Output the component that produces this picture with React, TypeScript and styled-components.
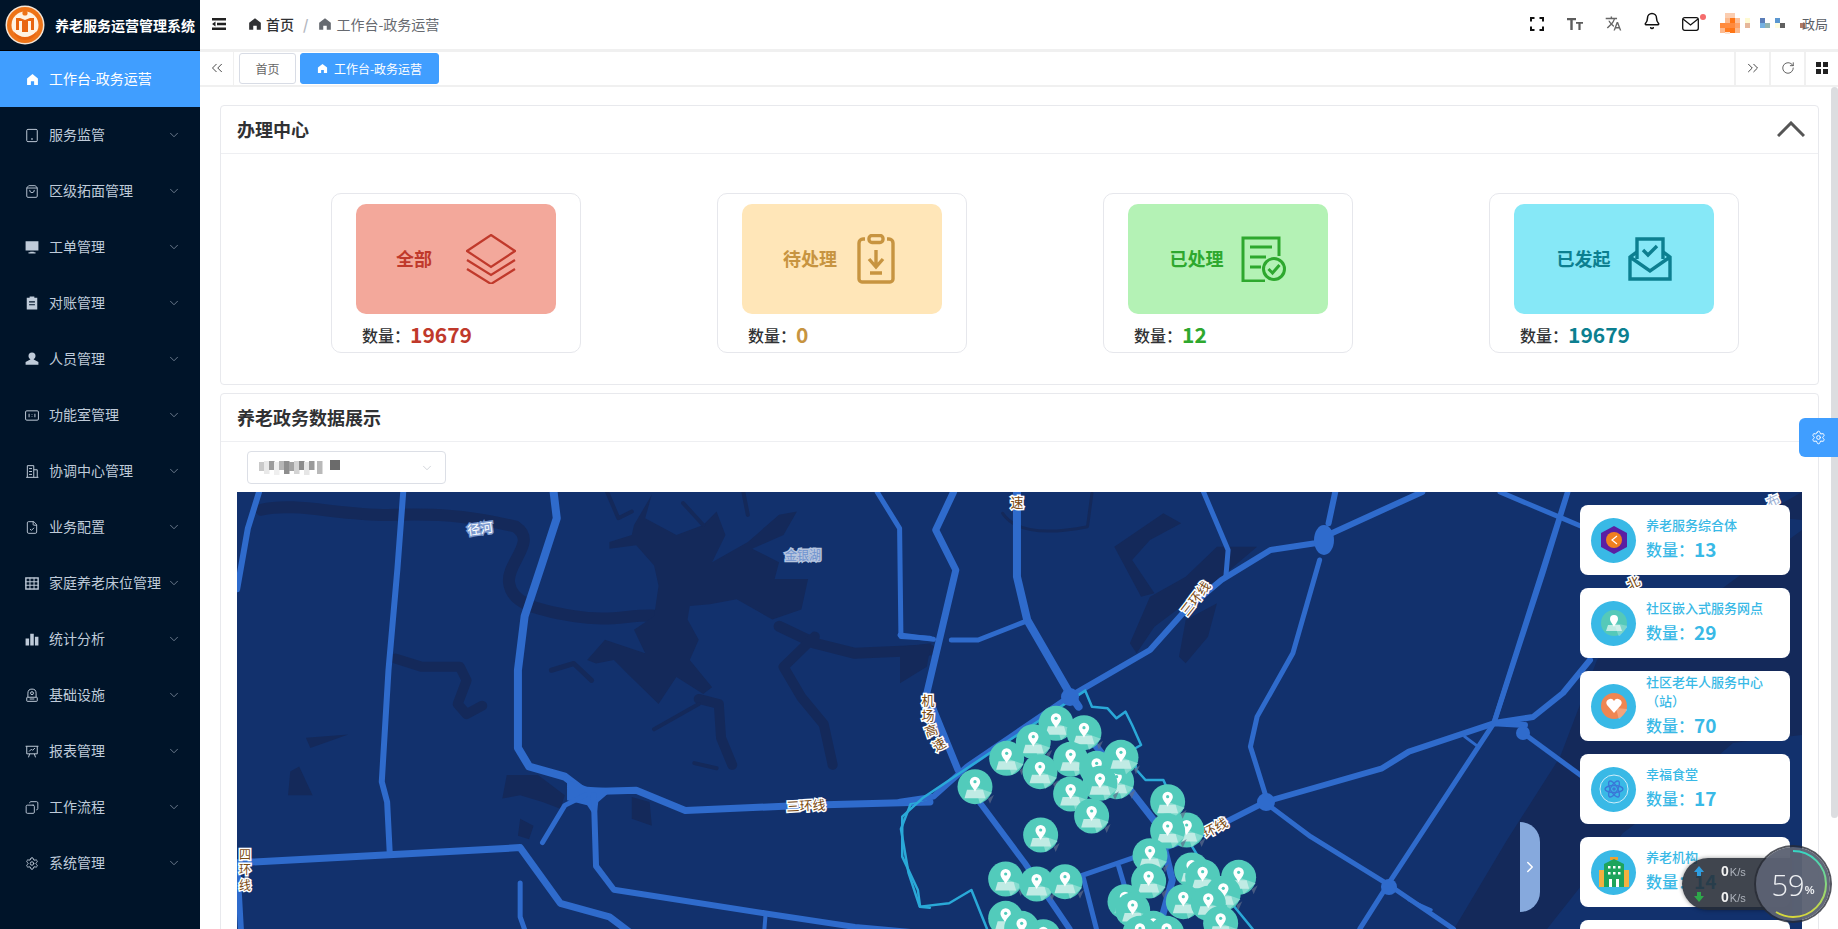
import React from 'react';
import styled, { createGlobalStyle } from 'styled-components';
import { ShoppingBag, ChevronDown, ChevronsLeft, ChevronsRight, Bell, RotateCw, FileCheck, Copy, Settings, ChevronRight } from 'lucide-react';
import { MdTranslate } from 'react-icons/md';

const Global = createGlobalStyle`
  html, body { margin: 0; padding: 0; height: 100%; overflow: hidden; background: #fff; }
  body, button { font-family: "Noto Sans CJK SC", "Liberation Sans", sans-serif; }
  * { box-sizing: border-box; }
`;

const Shell = styled.div`display: flex; width: 1838px; height: 929px; overflow: hidden;`;
const Sidebar = styled.aside`width: 200px; flex: none; background: #001429; color: #bfcbd9; display: flex; flex-direction: column;`;
const Brand = styled.div`height: 51px; display: flex; align-items: center; gap: 10px; padding-left: 5px; border-bottom: 1px solid #000; flex: none;`;
const BrandName = styled.span`font-size: 14px; font-weight: 700; color: #fff; white-space: nowrap; letter-spacing: 0;`;
const MenuItem = styled.div<{ $active?: boolean }>`
  height: 56px; flex: none; display: flex; align-items: center; padding: 0 19px 0 25px;
  font-size: 14px; white-space: nowrap;
  background: ${p => (p.$active ? '#409eff' : 'transparent')};
  color: ${p => (p.$active ? '#fff' : '#bfcbd9')};
`;
const MenuIcon = styled.span`width: 14px; height: 14px; display: flex; align-items: center; justify-content: center; margin-right: 10px; flex: none;`;
const MenuText = styled.span`flex: 1; line-height: 20px; position: relative; top: -1px;`;
const Main = styled.div`flex: 1; min-width: 0; display: flex; flex-direction: column;`;
const Header = styled.header`height: 52px; flex: none; display: flex; align-items: center; padding: 0 10px 2px 12px; border-bottom: 3px solid #f0f0f0;`;
const Crumb = styled.div`display: flex; align-items: center; margin-left: 22px; font-size: 14px; flex: 1;`;
const CrumbPart = styled.span<{ $strong?: boolean }>`
  display: flex; align-items: center; gap: 4px; font-weight: ${p => (p.$strong ? 500 : 400)};
  color: ${p => (p.$strong ? '#303133' : '#666a70')};
`;
const CrumbSep = styled.span`color: #b4b8bf; margin: 0 10px 0 9px; font-weight: 700;`;
const Tools = styled.div`display: flex; align-items: center; position: relative;`;
const Tool = styled.span<{ $w: number; $lift?: number }>`
  width: ${p => p.$w}px; display: flex; justify-content: center; position: relative;
  transform: translateY(${p => -(p.$lift ?? 0)}px); color: #333;
`;
const Dot = styled.i`position: absolute; right: 3px; top: -3px; width: 6px; height: 6px; border-radius: 50%; background: #f56c6c;`;
const MosaicSlot = styled.span`margin-left: 11px;`;
const UserName = styled.span`font-size: 13px; color: #5a5e66; margin-left: -3px; width: 26px; white-space: nowrap;`;
const TabBar = styled.div`height: 35px; flex: none; display: flex; align-items: center; border-bottom: 2px solid #f0f0f0; padding-bottom: 1px;`;
const TabBtn = styled.div<{ $right?: boolean; $w?: number }>`
  width: ${p => p.$w ?? (p.$right ? 35 : 34)}px; height: 33px; display: flex; align-items: center; justify-content: center; color: #444;
  ${p => (p.$right ? 'border-left: 2px solid #f0f0f0;' : 'border-right: 1px solid #f0f0f0;')}
`;
const TabList = styled.div`display: flex; gap: 4px; margin-left: 5px; flex: 1;`;
const Tab = styled.div<{ $active?: boolean }>`
  height: 31px; display: flex; align-items: center; justify-content: center; gap: 6px; font-size: 12px; border-radius: 3px;
  padding: 0 13px; border: 1px solid ${p => (p.$active ? '#409eff' : '#d8dce5')};
  background: ${p => (p.$active ? '#409eff' : '#fff')}; color: ${p => (p.$active ? '#fff' : '#666')};
  width: ${p => (p.$active ? 139 : 57)}px; white-space: nowrap;
`;
const Content = styled.div`flex: 1; min-height: 0; overflow: hidden; padding: 18px 19px 20px 20px;`;
const ScrollThumb = styled.div`position: fixed; left: 1831px; top: 87px; width: 7px; height: 731px; border-radius: 4px; background: #dcdde0;`;
const Card = styled.section`border: 1px solid #e8e9ed; border-radius: 4px; background: #fff; & + & { margin-top: 8px; }`;
const CardHead = styled.div`height: 48px; display: flex; align-items: center; justify-content: space-between; padding: 0 13px 2px 16px; border-bottom: 1px solid #eeeff2;`;
const CardTitle = styled.h2`margin: 0; font-size: 18px; line-height: 24px; font-weight: 700; color: #303133;`;
const StatRow = styled.div`display: flex; justify-content: space-around; padding: 39px 11px 31px 42px;`;
const Stat = styled.div`width: 250px; height: 160px; border: 1px solid #e6e7ec; border-radius: 10px; padding: 10px 24px 0;`;
const StatBox = styled.div<{ $bg: string; $fg: string; $gap: number }>`
  width: 200px; height: 110px; border-radius: 10px; background: ${p => p.$bg}; color: ${p => p.$fg};
  display: flex; align-items: center; justify-content: center; gap: ${p => p.$gap}px;
  font-size: 18px; font-weight: 700;
`;
const StatLabel = styled.span`position: relative; top: -1px;`;
const StatCount = styled.div`display: flex; align-items: center; margin: 7px 0 0 6px; height: 28px; font-size: 16px; font-weight: 500; color: #303133;`;
const StatNum = styled.span<{ $fg: string }>`font-size: 21px; font-weight: 700; color: ${p => p.$fg}; line-height: 24px; position: relative; top: -1px;`;
const MapBody = styled.div`padding: 9px 16px 0;`;
const Select = styled.div`width: 199px; height: 33px; margin: 0 0 8px 10px; border: 1px solid #dcdfe6; border-radius: 4px; display: flex; align-items: center; justify-content: space-between; padding: 0 11px 0 11px; color: #c0c4cc;`;
const MapFrame = styled.div`position: relative; height: 545px; background: #12316d; overflow: hidden; margin-bottom: 18px;`;
const MapSvg = styled.svg`
  display: block; width: 100%; height: 100%;
  path, polyline { vector-effect: non-scaling-stroke; stroke-linejoin: round; stroke-linecap: round; }
`;
const Panels = styled.div`position: absolute; top: 13px; right: 12px; display: flex; flex-direction: column; gap: 13px;`;
const Panel = styled.div`width: 210px; height: 70px; border-radius: 8px; background: #fff; display: flex; align-items: center; gap: 10px; padding: 0 11px; color: #39b9e6;`;
const Disc = styled.span`width: 45px; height: 45px; border-radius: 50%; flex: none; background: #39b9e6; display: flex; align-items: center; justify-content: center;`;
const PanelText = styled.div`width: 132px; position: relative; top: -2px;`;
const PanelTitle = styled.div`font-size: 13px; line-height: 19px; font-weight: 500;`;
const PanelCount = styled.div`display: flex; align-items: center; font-size: 16px; font-weight: 500; line-height: 24px; margin-top: 3px;`;
const PanelNum = styled.span`font-size: 19px; font-weight: 700;`;
const Toggle = styled.div`position: absolute; left: 1283px; top: 330px; width: 20px; height: 90px; background: #86a9dd; border-radius: 0 20px 20px 0; display: flex; align-items: center; justify-content: center; color: #fff;`;
const SettingsTab = styled.div`position: fixed; right: 0; top: 418px; width: 39px; height: 39px; background: #409eff; border-radius: 6px 0 0 6px; display: flex; align-items: center; justify-content: center; color: #fff;`;
const NetPill = styled.div`position: fixed; left: 1682px; top: 858px; width: 110px; height: 52px; background: rgba(38, 43, 54, .88); border-radius: 26px 0 0 26px; display: grid; grid-template-rows: 1fr 1fr; padding-left: 11px; box-shadow: 0 0 4px rgba(0,0,0,.4);`;
const NetRow = styled.div`display: flex; align-items: center; gap: 16px; height: 26px;`;
const NetZero = styled.span`font-size: 14px; font-weight: 700; color: #f2f2f2; font-family: "Liberation Sans", sans-serif;`;
const NetUnit = styled.span`font-size: 11px; font-weight: 400; color: #aeb3bc; margin-left: 1px;`;
const NetDial = styled.div`position: fixed; left: 1756px; top: 847px; width: 74px; height: 74px; border-radius: 50%; background: rgba(92, 98, 114, .96); box-shadow: 0 0 0 2px rgba(40,44,54,.8); display: flex; align-items: center; justify-content: center; color: #eef0f3;`;
const DialRing = styled.svg`position: absolute; inset: 0;`;
const DialNum = styled.span`font-size: 29px; font-weight: 300; font-family: "Open Sans", sans-serif; line-height: 1;`;
const DialPct = styled.span`font-size: 11px; font-weight: 700; margin-top: 12px; font-family: "Liberation Sans", sans-serif;`;

const HomeIcon = ({ s = 14 }: { s?: number }) => (
  <svg width={s} height={s} viewBox="0 0 24 24" fill="currentColor"><path d="M12 2 2 10v12h7v-7h6v7h7V10z" /></svg>
);
const Filled = ({ d }: { d: string }) => (
  <svg width="14" height="14" viewBox="0 0 24 24" fill="#bfcbd9"><path d={d} fillRule="evenodd" /></svg>
);
const Line = ({ children }: { children: React.ReactNode }) => (
  <svg width="15" height="15" viewBox="0 0 24 24" fill="none" stroke="#bfcbd9" strokeWidth="1.7">{children}</svg>
);

const menu: [string, React.ReactNode][] = [
  ['服务监管', <Line><rect x="3" y="1.5" width="18" height="21" rx="2" /><circle cx="12" cy="18" r=".8" /></Line>],
  ['区级拓面管理', <ShoppingBag size={15} strokeWidth={1.6} />],
  ['工单管理', <Filled d="M1 2h22v16H1zM9 20h6v1h3v2H6v-2h3z" />],
  ['对账管理', <Filled d="M8 1h8v2h5v20H3V3h5zM7 9v2h10V9zM7 14v2h10v-2z" />],
  ['人员管理', <Filled d="M12 1a6 6 0 0 1 6 6c0 2-1 4-3 5v1l8 4v5H1v-5l8-4v-1C7 11 6 9 6 7a6 6 0 0 1 6-6z" />],
  ['功能室管理', <Line><rect x="1" y="4" width="22" height="16" rx="2" /><path d="M7 9v6M17 9v6M12 10v1M12 13v1" /></Line>],
  ['协调中心管理', <Line><path d="M2 22h21M4 22V2h11v20M15 9h6v13M7 7h5M7 12h5M7 17h5" /></Line>],
  ['业务配置', <FileCheck size={15} strokeWidth={1.6} />],
  ['家庭养老床位管理', <Line><rect x="1.5" y="2.5" width="21" height="19" strokeWidth="2.4" /><path d="M8.5 2v20M15.5 2v20M1 9h22M1 15h22" /></Line>],
  ['统计分析', <Filled d="M1 11h6v12H1zM9 3h6v20H9zM17 8h6v15h-6z" />],
  ['基础设施', <Line><path d="M5 15V8a7 7 0 0 1 14 0v7" /><circle cx="12" cy="8" r="2.5" /><rect x="3" y="15" width="18" height="7" rx="1" /><path d="M8 18h8" /></Line>],
  ['报表管理', <Line><path d="M1 3h22M3 3v13h18V3M8 16l-2 6M16 16l2 6M7 12l4-4 2 2 4-4" /></Line>],
  ['工作流程', <Copy size={15} strokeWidth={1.6} style={{ transform: 'scaleX(-1)' }} />],
  ['系统管理', <Settings size={15} strokeWidth={1.6} />],
];

const Logo = () => (
  <svg width="40" height="40" viewBox="0 0 40 40">
    <circle cx="20" cy="20" r="19.5" fill="#f3e6d8" />
    <circle cx="20" cy="20" r="18" fill="#ee7418" />
    <circle cx="20" cy="20" r="13.5" fill="#fff3e3" />
    <circle cx="20" cy="8" r="2.6" fill="#ee7418" />
    <path d="M11 25V13h4l5 2 5-2h4v12h-3V16h-3v11h-6V16h-3v9z" fill="#e9650f" />
    <path d="M8 26q6 6 12 6t12-6q-3 9-12 9T8 26z" fill="#e9650f" />
  </svg>
);

const Mosaic = () => {
  const c: [number, number, string][] = [
    [5, 0, '#fbcdb0'], [10, 0, '#fbcdb0'],
    [5, 5, '#fbb98c'], [10, 5, '#ff7514'], [15, 5, '#fbc09a'],
    [0, 10, '#ff8a3c'], [5, 10, '#ff8c40'], [10, 10, '#ff8a3c'], [15, 10, '#ffa266'],
    [0, 15, '#fdb98e'], [5, 15, '#ff7b20'], [10, 15, '#ff7514'], [15, 15, '#fbb98c'],
    [5, 19, '#fde3d2'],
    [25, 5, '#fffad2'], [25, 10, '#e6b79a'],
    [40, 5, '#5a7db8'], [45, 10, '#92b3b0'], [40, 10, '#74b0e2'],
    [55, 5, '#5b97d0'], [55, 10, '#fffde0'], [60, 10, '#606060'],
    [80, 10, '#b07860'],
  ];
  return (
    <svg width="85" height="21" viewBox="0 0 85 21" style={{ display: 'block' }}>
      {c.map(([x, y, f], i) => <rect key={i} x={x} y={y} width="5" height="5" fill={f} />)}
    </svg>
  );
};

const SelectMosaic = () => {
  const v = '#c9c9c9,0;#e9e9e9,5;#9c9c9c,10;#efefef,15;#b5b5b5,20;#8e8e8e,25;#a3a3a3,30;#d4d4d4,35;#8c8c8c,40;#e6e6e6,45;#9a9a9a,50;#b9b9b9,58'.split(';');
  return (
    <svg width="82" height="16" viewBox="0 0 82 16">
      {v.map((e, i) => {
        const [f, x] = e.split(',');
        return <rect key={i} x={+x} y={i % 3 === 0 ? 2 : 1} width="5.5" height={i % 2 ? 13 : 9} fill={f} />;
      })}
      <rect x="71" y="0" width="10" height="10" fill="#6b6b6b" />
    </svg>
  );
};

const Marker = () => (
  <g>
    <circle r="17.5" fill="#52cbbb" />
    <path d="M0 0 17 6 5 17z" fill="#86dccf" />
    <path d="M-8 3h16l2.5 8.5h-21z" fill="#c0ebe4" />
    <path d="M0-10a5.2 5.2 0 0 1 5.2 5.2C5.2-1.5 2 1 0 5c-2-4-5.2-6.5-5.2-9.8A5.2 5.2 0 0 1 0-10z" fill="#fff" />
    <circle cy="-5" r="1.6" fill="#52cbbb" />
    <path d="M13 12 19 8 15 17z" fill="#5e6c8c" opacity=".7" />
  </g>
);

const markers = [
  [468, 130], [552, 158], [400, 185], [320, 235], [420, 275], [512, 238], [650, 305], [590, 265], [663, 232], [600, 310], [512, 342], [575, 408], [225, 320], [422, 465],
  [860, 450], [803, 365], [803, 453], [750, 527], [746, 603], [317, 597], [410, 612], [495, 605], [675, 665], [698, 690], [875, 570], [908, 590], [1016, 592], [970, 640],
  [850, 665], [925, 670], [317, 715], [365, 745], [760, 745], [800, 760], [962, 730], [430, 770], [720, 760],
];

const MapLabel = ({ x, y, r = 0, c = '#7a4a10', h = '#fff', s = 13, children }: { x: number; y: number; r?: number; c?: string; h?: string; s?: number; children: string }) => (
  <text
    x={x} y={y} transform={`rotate(${r} ${x} ${y})`} textAnchor="middle" dominantBaseline="central" fontSize={s}
    fill={c} stroke={h} strokeWidth="3" style={{ paintOrder: 'stroke' }} fontFamily='"Noto Sans CJK SC", sans-serif'
  >{children}</text>
);

const R = ({ d, w = 5 }: { d: string; w?: number }) => <path d={d} fill="none" stroke="#2f6bcc" strokeWidth={w} />;
const W = ({ d, w }: { d: string; w?: number }) =>
  w ? <path d={d} fill="none" stroke="#14295a" strokeWidth={w} /> : <path d={d} fill="#14295a" />;

const CityMap = () => (
  <MapSvg viewBox="237 492 1565 545">
    <polygon points="1400,1037 1454,929 1507,840 1560,757 1597,660 1650,600 1720,590 1802,530 1802,735 1733,743 1667,800 1623,833 1547,929 1500,1037" fill="#14295a" />
    <polygon points="1760,516 1802,492 1802,520" fill="#14295a" />
    <g transform="translate(230 400) scale(.4464 .3378)">
      <W w={12} d="M70,325 C150,300 250,345 370,340 S560,350 640,375 C690,420 620,480 625,540 S680,620 770,640 S900,630 970,640" />
      <W w={10} d="M370,765 L430,790 L515,790 L530,830 L510,900 L530,930 L565,905" />
      <W d="M1000,400 L1060,370 L1000,450 L1090,330 L1110,400 L1080,480 L1160,420 L1230,340 L1270,330 L1240,400 L1170,440 L1230,480 L1220,530 L1295,530 L1280,620 L1215,650 L1135,590 L1075,605 L1030,610 L1025,650 L1050,710 L1030,770 L1080,850 L1060,870 L1000,820 L960,900 L890,810 L860,770 L820,780 L800,770 L840,710 L930,750 L905,680 L950,640 L960,550 L950,490 L910,430 L850,440 L850,420 L900,400 L905,370 L945,280 L930,350 Z" />
      <W w={4} d="M845,273 L870,350 L900,330 M1150,273 L1160,340 M1015,305 L1060,370" />
      <W w={11} d="M1230,670 L1310,720 L1400,750 L1568,740" />
      <W w={10} d="M1310,700 L1240,790 L1280,880 L1330,960 L1350,1080" />
      <W w={10} d="M1050,885 L1095,900 L1100,1000 L1125,1080" />
      <W w={4} d="M950,975 L1050,900 M1040,1075 L1090,1090" />
      <W w={5} d="M720,800 L770,780 L810,830" />
      <W d="M135,1100 L155,1085 L185,1170 L130,1170Z M620,1110 L690,1110 L750,1170 L740,1210 L700,1190 L650,1170 L610,1180Z M900,1175 L940,1190 L945,1260 L900,1240Z M170,1000 L265,990 L180,1030Z M650,1240 L680,1260 L670,1300 L645,1290Z" />
      <R w={6} d="M65,273 L40,380 L16,560" />
      <R w={6} d="M388,273 L375,500 L355,800 L340,1130 L352,1190 L358,1345" />
      <R w={8} d="M725,273 L732,350 L700,480 L660,640 L645,800 L645,1030 L670,1085 L750,1115 L795,1160" />
      <R w={7} d="M795,1160 L910,1155 L1020,1215 L1290,1200 L1568,1190" />
      <path d="M755,1125 L800,1145 L860,1150 L825,1190 L820,1240 L800,1200 L755,1185Z" fill="#2f6bcc" />
      <R w={5} d="M1450,273 L1500,380 L1503,700 L1568,705" />
      <R w={5} d="M700,1310 L750,1200 L795,1170" />
      <R w={6} d="M815,1170 L820,1380 L860,1450 L1200,1520 L1400,1560 L1568,1580" />
      <R w={7} d="M16,1370 L650,1325 L740,1490 L850,1530 L1000,1680" />
      <R w={5} d="M650,1430 L650,1530 L690,1680" />
      <R w={6} d="M16,1370 L30,1700" />
      <R w={4} d="M1200,1520 L1190,1680" />
      <path d="M1568,1178 L1525,1195 L1503,1270 L1520,1400 L1545,1500 L1568,1503" fill="none" stroke="#2aa9d8" strokeWidth="2.5" />
    </g>
    <g transform="translate(900 480) scale(.4464 .3333)">
      <W d="M480,200 L590,100 L630,130 L560,180 L520,240 L570,340 L540,350Z M560,350 L640,290 L710,200 L800,200 L730,280 L640,370 L570,440 L530,520 L515,490 Z M640,420 L710,370 L690,470 L640,550 L625,530Z M0,500 L70,490 L60,560 L0,610Z" />
      <W w={3} d="M230,100 Q270,180 420,140 L430,40" />
      <R w={8} d="M262,36 L262,290 L285,420 L380,640 L400,680" />
      <R w={7} d="M440,800 L580,1040 L610,1200 L580,1347" />
      <R w={7} d="M120,36 L80,150 L125,270 L60,640 L130,870" />
      <R w={6} d="M180,970 L280,1150 L380,1347" />
      <R w={6} d="M0,965 L75,950 L150,860 L380,650 L560,510 L640,390 L720,300 L830,210 L930,190 L950,170 L1170,36" />
      <R w={6} d="M975,36 L960,130" />
      <R w={5} d="M940,240 L880,520 L800,710 L785,800 L820,950" />
      <R w={5} d="M680,36 L735,210 L730,290" />
      <R w={6} d="M1400,735 L1330,730 L1140,815 L1080,865 L820,965 L680,1060 L600,1100" />
      <R w={5} d="M830,980 L920,1070 L1095,1215 L1240,1347" />
      <R w={5} d="M1330,730 L1090,1220 L1030,1347" />
      <R w={5} d="M1495,36 L1330,730" />
      <R w={5} d="M0,465 L75,478 M115,480 L175,480 L280,425" />
      <R w={5} d="M400,1190 L530,1130 M490,1160 L510,1250 M410,1190 L440,1347" />
      <R w={3} d="M1265,770 L1295,800 M1140,1260 L1190,1290" />
      <path d="M415,632 L430,680 L465,685 L485,715 L505,695 L520,735 L540,795 L520,810 L530,870 L550,900 L590,900 L600,930 M415,632 L200,820 L50,955 L5,1010 L5,1130 L40,1230 L45,1280 L110,1270 L160,1230 L195,1347 M650,1090 L700,1200 L790,1347" fill="none" stroke="#2aa9d8" strokeWidth="2.5" />
    </g>
    <R w={5} d="M1568,492 L1543,573 L1494,723" />
    <R w={5} d="M1500,492 L1583,527" />
    <R w={6} d="M1590,660 L1563,693 L1533,717 L1494,723" />
    <R w={5} d="M1523,733 L1583,777" />
    <ellipse cx="1324" cy="540" rx="10" ry="15" fill="#2f6bcc" />
    <circle cx="1266" cy="802" r="9" fill="#2f6bcc" />
    <circle cx="1389" cy="887" r="8" fill="#2f6bcc" />
    <circle cx="1523" cy="733" r="7" fill="#2f6bcc" />
    <circle cx="1070" cy="697" r="9" fill="#2f6bcc" />
    <MapLabel x={480} y={528} r={-8} c="#fff" h="#7d9bd0">径河</MapLabel>
    <MapLabel x={803} y={554} c="#6f93cf" h="#b5c4de" s={12}>金银湖</MapLabel>
    <MapLabel x={806} y={805} r={-3}>三环线</MapLabel>
    <MapLabel x={1017} y={501}>速</MapLabel>
    <MapLabel x={928} y={699} r={0}>机</MapLabel>
    <MapLabel x={928} y={714} r={0}>场</MapLabel>
    <MapLabel x={931} y={730} r={-18}>高</MapLabel>
    <MapLabel x={939} y={744} r={-30}>速</MapLabel>
    <MapLabel x={1195} y={598} r={-52}>三环线</MapLabel>
    <MapLabel x={1215} y={827} r={-28}>环线</MapLabel>
    <MapLabel x={245} y={853} s={12}>四</MapLabel>
    <MapLabel x={245} y={868} s={12}>环</MapLabel>
    <MapLabel x={245} y={884} s={12}>线</MapLabel>
    <MapLabel x={1633} y={582} r={-25}>北</MapLabel>
    <MapLabel x={1773} y={500} r={-25} c="#9cb0d4">布</MapLabel>
    <g transform="translate(900 680) scale(.3333)">
      {markers.map(([x, y], i) => (
        <g key={i} transform={`translate(${x} ${y}) scale(3)`}><Marker /></g>
      ))}
    </g>
  </MapSvg>
);

const stats = [
  { t: '全部', n: 19679, bg: '#f3a89b', fg: '#c0392b', gap: 34, icon: (
    <svg width="50" height="50" viewBox="0 0 50 50" fill="none" stroke="currentColor" strokeWidth="2.2"><path d="M25 1 49 17 25 33 1 17z" /><path d="M1 26l24 15 24-15M1 35l24 15 24-15" /></svg>
  ) },
  { t: '待处理', n: 0, bg: '#ffe6b8', fg: '#c79440', gap: 14, icon: (
    <svg width="50" height="50" viewBox="0 0 50 50" fill="none" stroke="currentColor" strokeWidth="3.4"><rect x="18" y="1.5" width="14" height="7" rx="3" /><path d="M14 5h-2a4 4 0 0 0-4 4v36a3 3 0 0 0 3 3h28a3 3 0 0 0 3-3V9a4 4 0 0 0-4-4h-2M25 16v16M18 25l7 8 7-8M19 39h12" /></svg>
  ) },
  { t: '已处理', n: 12, bg: '#b4f2b5', fg: '#2ea82e', gap: 17, icon: (
    <svg width="46" height="46" viewBox="0 0 46 46" fill="none" stroke="currentColor" strokeWidth="3"><path d="M38 20V2H2v43h22" /><path d="M9 11h22M9 21h16M9 31h11" /><circle cx="33" cy="33" r="10.5" /><path d="M27.5 33l4 4 7-8" /></svg>
  ) },
  { t: '已发起', n: 19679, bg: '#86e8f7', fg: '#0c7f90', gap: 17, icon: (
    <svg width="44" height="44" viewBox="0 0 44 44" fill="none" stroke="currentColor" strokeWidth="3.4"><path d="M9 22V2h26v20" /><path d="M9 15 2 20v22h40V20l-7-5M2 20l20 14 20-14" /><path d="M15 13l5 5 9-9" /></svg>
  ) },
];

const panelIcons = [
  <svg width="26" height="28" viewBox="0 0 26 28"><path d="M13 0 26 7v14l-13 7L0 21V7z" fill="#5b1fa3" /><circle cx="13" cy="14" r="8" fill="#f08020" /><path d="M16 10l-5 4 5 4" fill="none" stroke="#fff" strokeWidth="1.2" /></svg>,
  <svg width="26" height="26" viewBox="-13 -13 26 26"><circle r="13" fill="#55c9b9" /><path d="M-6 2h12l2 6H-8z" fill="#c0ebe4" /><path d="M0-8a4 4 0 0 1 4 4C4-1 1 1 0 4c-1-3-4-5-4-8a4 4 0 0 1 4-4z" fill="#fff" /><path d="M0 0 14 3 5 14z" fill="#fff" opacity=".25" /></svg>,
  <svg width="26" height="26" viewBox="-13 -13 26 26"><circle r="13" fill="#ef8652" /><path d="M0 7-7-1a4 4 0 0 1 7-4 4 4 0 0 1 7 4z" fill="#fff" /><path d="M2 2 14 3 5 14z" fill="#fff" opacity=".25" /></svg>,
  <svg width="34" height="34" viewBox="-17 -17 34 34" fill="none"><circle r="14" stroke="#cfeefa" strokeWidth="1" /><g stroke="#3a78d8" strokeWidth="1.4"><ellipse rx="9" ry="3.5" /><ellipse rx="9" ry="3.5" transform="rotate(60)" /><ellipse rx="9" ry="3.5" transform="rotate(120)" /></g><circle r="1.8" fill="#3a78d8" /></svg>,
  <svg width="30" height="30" viewBox="0 0 30 30"><rect x="11" y="0" width="8" height="3" fill="#f0a030" /><rect x="0" y="13" width="30" height="17" fill="#f5b040" /><path d="M5 7 15 2l10 5v23H5z" fill="#1ea45c" /><g fill="#fff"><rect x="9" y="9" width="2.5" height="2.5" /><rect x="14" y="9" width="2.5" height="2.5" /><rect x="19" y="9" width="2.5" height="2.5" /><rect x="9" y="15" width="2.5" height="2.5" /><rect x="14" y="15" width="2.5" height="2.5" /><rect x="19" y="15" width="2.5" height="2.5" /><rect x="10" y="22" width="3" height="8" /><rect x="17" y="22" width="3" height="8" /></g></svg>,
];

const panels = [
  { t: '养老服务综合体', n: 13 },
  { t: '社区嵌入式服务网点', n: 29 },
  { t: '社区老年人服务中心（站）', n: 70 },
  { t: '幸福食堂', n: 17 },
  { t: '养老机构', n: 14 },
];

export default function App() {
  return (
    <Shell>
      <Global />
      <Sidebar>
        <Brand><Logo /><BrandName>养老服务运营管理系统</BrandName></Brand>
        <MenuItem $active><MenuIcon><HomeIcon s={13} /></MenuIcon><MenuText>工作台-政务运营</MenuText></MenuItem>
        {menu.map(([t, ic]) => (
          <MenuItem key={t}>
            <MenuIcon>{ic}</MenuIcon>
            <MenuText>{t}</MenuText>
            <ChevronDown size={14} strokeWidth={1.3} color="#8a97a8" />
          </MenuItem>
        ))}
      </Sidebar>
      <Main>
        <Header>
          <svg width="14" height="12" viewBox="0 0 14 12" fill="#222"><path d="M0 0h14v2.4H0zM5 4.8h9v2.4H5zM0 9.6h14V12H0zM3.5 3.5v5L0 6z" /></svg>
          <Crumb>
            <CrumbPart $strong><HomeIcon s={14} />首页</CrumbPart>
            <CrumbSep>/</CrumbSep>
            <CrumbPart><HomeIcon s={14} />工作台-政务运营</CrumbPart>
          </Crumb>
          <Tools>
            <Tool $w={38}>
              <svg width="14" height="14" viewBox="0 0 14 14" fill="none" stroke="#111" strokeWidth="2"><path d="M1 4.5V1h3.5M9.5 1H13v3.5M13 9.5V13H9.5M4.5 13H1V9.5" /></svg>
            </Tool>
            <Tool $w={38}>
              <svg width="16" height="12" viewBox="0 0 16 12" fill="#5c5c5c"><path d="M0 0h9v2.2H5.7V12H3.3V2.2H0zM9 4h7v1.8h-2.4V12h-2.2V5.8H9z" /></svg>
            </Tool>
            <Tool $w={39}><MdTranslate size={17} color="#666" /></Tool>
            <Tool $w={38} $lift={3}><Bell size={18} strokeWidth={2} color="#111" /></Tool>
            <Tool $w={38}>
              <svg width="17" height="14" viewBox="0 0 17 14" fill="none" stroke="#111" strokeWidth="1.3"><rect x=".7" y=".7" width="15.6" height="12.6" rx="2" /><path d="M1 2l7.5 6L16 2" /></svg>
              <Dot />
            </Tool>
            <MosaicSlot><Mosaic /></MosaicSlot>
            <UserName>政局</UserName>
          </Tools>
        </Header>
        <TabBar>
          <TabBtn><ChevronsLeft size={18} strokeWidth={1.3} /></TabBtn>
          <TabList>
            <Tab>首页</Tab>
            <Tab $active><HomeIcon s={11} />工作台-政务运营</Tab>
          </TabList>
          <TabBtn $right><ChevronsRight size={18} strokeWidth={1.3} /></TabBtn>
          <TabBtn $right><RotateCw size={14} strokeWidth={1.4} /></TabBtn>
          <TabBtn $right $w={34}>
            <svg width="12" height="12" viewBox="0 0 12 12" fill="#222"><path d="M0 0h5v5H0zM7 0h5v5H7zM0 7h5v5H0zM7 7h5v5H7z" /></svg>
          </TabBtn>
        </TabBar>
        <Content>
          <Card>
            <CardHead>
              <CardTitle>办理中心</CardTitle>
              <svg width="28" height="16" viewBox="0 0 28 16" fill="none" stroke="#555" strokeWidth="3"><path d="M1 15 14 2l13 13" /></svg>
            </CardHead>
            <StatRow>
              {stats.map(s => (
                <Stat key={s.t}>
                  <StatBox $bg={s.bg} $fg={s.fg} $gap={s.gap}><StatLabel>{s.t}</StatLabel>{s.icon}</StatBox>
                  <StatCount>数量：<StatNum $fg={s.fg}>{s.n}</StatNum></StatCount>
                </Stat>
              ))}
            </StatRow>
          </Card>
          <Card>
            <CardHead><CardTitle>养老政务数据展示</CardTitle></CardHead>
            <MapBody>
              <Select><SelectMosaic /><ChevronDown size={14} strokeWidth={1.2} /></Select>
              <MapFrame>
                <CityMap />
                <Panels>
                  {panels.map((p, i) => (
                    <Panel key={p.t}>
                      <Disc>{panelIcons[i]}</Disc>
                      <PanelText>
                        <PanelTitle>{p.t}</PanelTitle>
                        <PanelCount>数量：<PanelNum>{p.n}</PanelNum></PanelCount>
                      </PanelText>
                    </Panel>
                  ))}
                  <Panel />
                </Panels>
                <Toggle><ChevronRight size={18} strokeWidth={2} /></Toggle>
              </MapFrame>
            </MapBody>
          </Card>
        </Content>
      </Main>
      <ScrollThumb />
      <SettingsTab><Settings size={15} strokeWidth={1.6} /></SettingsTab>
      <NetPill>
        <NetRow>
          <svg width="12" height="12" viewBox="0 0 12 12" fill="#2f9ee0"><path d="M6 1 11 7H8v4H4V7H1z" /></svg>
          <NetZero>0<NetUnit>K/s</NetUnit></NetZero>
        </NetRow>
        <NetRow>
          <svg width="12" height="12" viewBox="0 0 12 12" fill="#2ea84a"><path d="M6 11 1 5h3V1h4v4h3z" /></svg>
          <NetZero>0<NetUnit>K/s</NetUnit></NetZero>
        </NetRow>
      </NetPill>
      <NetDial>
        <DialRing width="74" height="74" viewBox="0 0 74 74" fill="none">
          <defs>
            <linearGradient id="ringGrad" x1="0" y1="0" x2="0" y2="1">
              <stop offset="0" stopColor="#36d6c4" />
              <stop offset="1" stopColor="#d8d83a" />
            </linearGradient>
          </defs>
          <path d="M37 4A33 33 0 0 1 37 70 33 33 0 0 1 20 65" stroke="url(#ringGrad)" strokeWidth="2" />
        </DialRing>
        <DialNum>59</DialNum><DialPct>%</DialPct>
      </NetDial>
    </Shell>
  );
}
